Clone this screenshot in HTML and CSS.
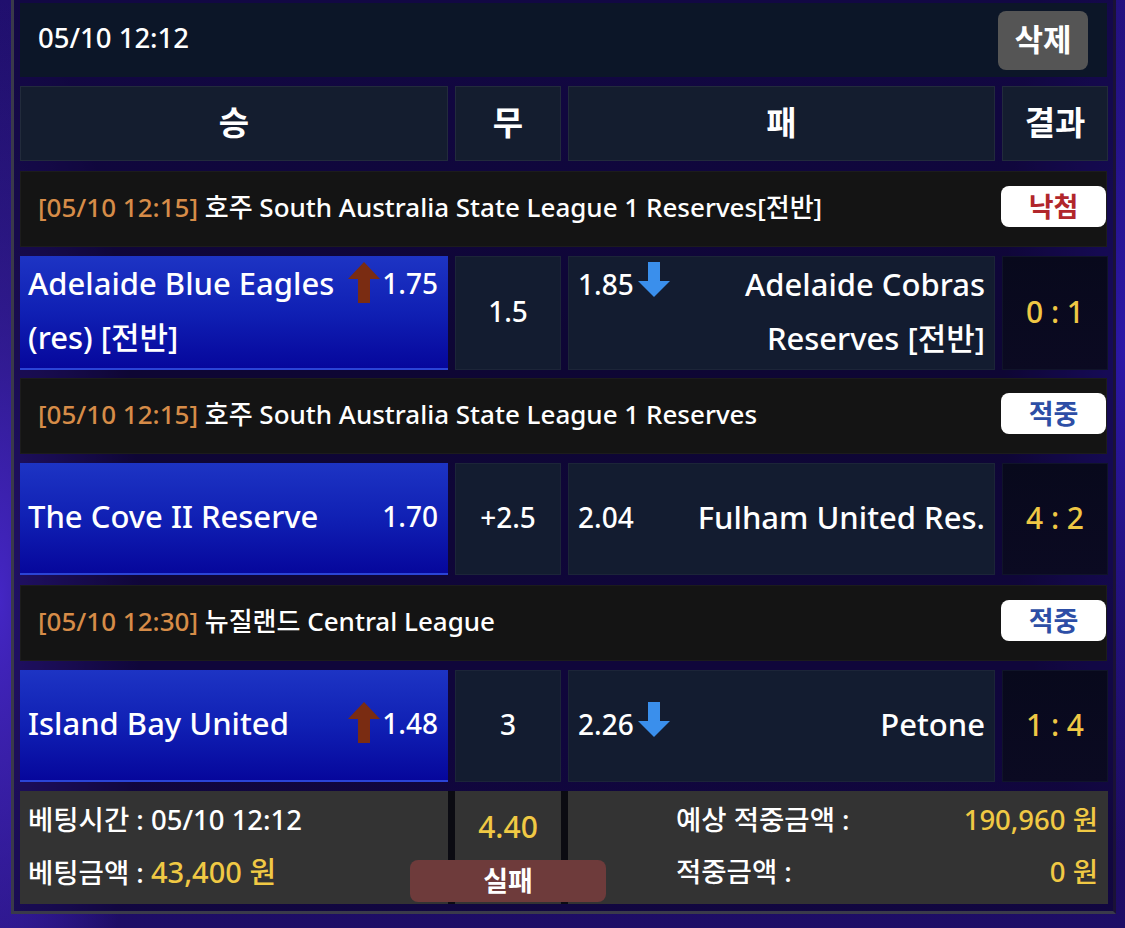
FILE: index.html
```html
<!DOCTYPE html>
<html lang="ko">
<head>
<meta charset="utf-8">
<link rel="stylesheet" href="styles.css">
</head>
<body>
<div class="frame">
  <div class="topbar">
    <span class="topbar-time">05/10 12:12</span>
    <button class="btn-del">삭제</button>
  </div>

  <div class="grid heads">
    <div class="head-cell">승</div>
    <div class="head-cell">무</div>
    <div class="head-cell">패</div>
    <div class="head-cell">결과</div>
  </div>

  <div class="league">
    <div class="league-text"><span class="league-date">[05/10 12:15]</span> 호주 South Australia State League 1 Reserves[전반]</div>
    <span class="badge badge-lose">낙첨</span>
  </div>
  <div class="grid match">
    <div class="home"><div class="team-wrap"><span class="odds odds-right"><svg class="arr-up" viewBox="0 0 32 41"><polygon points="16,0 32,17 22,17 22,41 10,41 10,17 0,17"/></svg>1.75</span>Adelaide Blue Eagles (res) [전반]</div></div>
    <div class="draw">1.5</div>
    <div class="away"><div class="team-wrap"><span class="odds odds-left">1.85<svg class="arr-down" viewBox="0 0 32 35"><polygon points="10,0 22,0 22,19 32,19 16,35 0,19 10,19"/></svg></span>Adelaide Cobras Reserves [전반]</div></div>
    <div class="result">0 : 1</div>
  </div>

  <div class="league">
    <div class="league-text"><span class="league-date">[05/10 12:15]</span> 호주 South Australia State League 1 Reserves</div>
    <span class="badge badge-win">적중</span>
  </div>
  <div class="grid match">
    <div class="home"><div class="team-wrap"><span class="odds odds-right">1.70</span>The Cove II Reserve</div></div>
    <div class="draw">+2.5</div>
    <div class="away"><div class="team-wrap"><span class="odds odds-left">2.04</span>Fulham United Res.</div></div>
    <div class="result">4 : 2</div>
  </div>

  <div class="league">
    <div class="league-text"><span class="league-date">[05/10 12:30]</span> 뉴질랜드 Central League</div>
    <span class="badge badge-win">적중</span>
  </div>
  <div class="grid match">
    <div class="home"><div class="team-wrap"><span class="odds odds-right"><svg class="arr-up" viewBox="0 0 32 41"><polygon points="16,0 32,17 22,17 22,41 10,41 10,17 0,17"/></svg>1.48</span>Island Bay United</div></div>
    <div class="draw">3</div>
    <div class="away"><div class="team-wrap"><span class="odds odds-left">2.26<svg class="arr-down" viewBox="0 0 32 35"><polygon points="10,0 22,0 22,19 32,19 16,35 0,19 10,19"/></svg></span>Petone</div></div>
    <div class="result">1 : 4</div>
  </div>

  <div class="footer">
    <div class="foot-left">
      <div>베팅시간 : 05/10 12:12</div>
      <div>베팅금액 : <span class="gold">43,400 원</span></div>
    </div>
    <div class="foot-mid">
      <div class="gold total-odds">4.40</div>
      <span class="status-fail">실패</span>
    </div>
    <div class="foot-right">
      <span>예상 적중금액 :</span><span class="gold val">190,960 원</span>
      <span>적중금액 :</span><span class="gold val">0 원</span>
    </div>
  </div>
</div>
</body>
</html>
```

FILE: styles.css
```css
* { box-sizing: border-box; }

html, body {
  margin: 0;
  padding: 0;
  height: 100%;
}

body {
  width: 1125px;
  height: 928px;
  overflow: hidden;
  font-family: "Noto Sans", "Noto Sans CJK KR", sans-serif;
  color: #ffffff;
  background:
    radial-gradient(ellipse 140px 600px at 0px 600px, #4426c4 0%, rgba(68,38,196,0) 100%),
    radial-gradient(ellipse 120px 500px at 1125px 350px, #2c18a8 0%, rgba(44,24,168,0) 100%),
    linear-gradient(180deg, #200f6e 0%, #150a48 40%, #1e0d66 100%);
}

.frame {
  margin-left: 11px;
  width: 1105px;
  padding: 3px 6px 7px 6px;
  border-left: 3px solid #3a3a4a;
  border-right: 3px solid #1a1236;
  border-bottom: 3px solid #3a3a4a;
  background: rgba(10, 4, 40, 0.6);
  display: flex;
  flex-direction: column;
  gap: 9px;
}

.topbar {
  height: 74px;
  background: #0c1628;
  display: flex;
  align-items: center;
  justify-content: space-between;
  padding: 0 19px 0 18px;
}

.topbar-time {
  font-size: 27.5px;
  font-weight: 500;
  margin-top: -6px;
}

.btn-del {
  width: 90px;
  height: 59px;
  border: none;
  border-radius: 8px;
  background: #555555;
  color: #ffffff;
  font-family: "Noto Sans CJK KR", sans-serif;
  font-size: 31px;
  font-weight: 700;
  padding: 0 0 6px 0;
  margin-top: 1px;
}

.grid {
  display: grid;
  grid-template-columns: 428px 106px 427px 106px;
  column-gap: 7px;
}

.heads { height: 75px; }

.head-cell {
  background: #141d2f;
  border: 1px solid #222b3c;
  display: flex;
  align-items: center;
  justify-content: center;
  font-family: "Noto Sans CJK KR", sans-serif;
  font-size: 33px;
  font-weight: 700;
  padding-bottom: 5px;
}

.league {
  height: 76px;
  background: #141414;
  border: 1px solid #1c1c1c;
  display: flex;
  align-items: center;
  justify-content: space-between;
  padding-left: 17px;
  margin-top: 1px;
}

.league-text {
  font-size: 26px;
  font-weight: 500;
  margin-top: -7px;
}

.league-date { color: #d68c48; }

.badge {
  width: 105px;
  height: 41px;
  background: #ffffff;
  border-radius: 8px;
  display: flex;
  align-items: center;
  justify-content: center;
  font-family: "Noto Sans CJK KR", sans-serif;
  font-size: 27px;
  font-weight: 700;
  margin-top: -5px;
  padding-bottom: 3px;
}

.badge-lose { color: #b1262b; }
.badge-win { color: #2d4ea6; }

.match { height: 112px; }

.home, .away {
  display: flex;
  align-items: center;
  font-size: 31px;
  font-weight: 500;
  line-height: 54px;
}

.home {
  background: linear-gradient(180deg, #1d34c4 0%, #1020b4 50%, #06079c 100%);
  border-bottom: 2px solid #2b44d6;
  padding: 0 10px 4px 8px;
}

.away {
  background: #131c30;
  border: 1px solid #1c2538;
  padding: 0 9px 4px 9px;
  text-align: right;
}

.team-wrap { width: 100%; }

.odds {
  white-space: nowrap;
  font-size: 28px;
}
.odds-right { float: right; }
.odds-left { float: left; }

.arr-up {
  width: 32px;
  height: 41px;
  fill: #7a2c12;
  vertical-align: middle;
  margin-top: -8px;
  margin-right: 2px;
}

.arr-down {
  width: 32px;
  height: 35px;
  fill: #3a8fec;
  vertical-align: middle;
  margin-top: -16px;
  margin-left: 4px;
}

.draw {
  background: #131c30;
  border: 1px solid #1c2538;
  display: flex;
  align-items: center;
  justify-content: center;
  font-size: 28px;
  font-weight: 500;
  padding-bottom: 4px;
}

.result {
  background: linear-gradient(180deg, #08091c 0%, #0b0a22 100%);
  border: 1px solid #10142a;
  display: flex;
  align-items: center;
  justify-content: center;
  font-size: 30px;
  font-weight: 500;
  color: #efc744;
  padding-bottom: 4px;
}

.footer {
  height: 113px;
  display: grid;
  grid-template-columns: 428px 106px 540px;
  column-gap: 7px;
  background: #0b0b12;
  font-size: 27.5px;
  font-weight: 500;
  line-height: 52px;
}

.gold { color: #f0c944; }

.foot-left {
  background: #333333;
  padding: 3px 8px 0 8px;
}

.foot-left .gold { font-size: 29px; }

.foot-mid {
  background: #333333;
  position: relative;
  text-align: center;
  padding-top: 10px;
  font-size: 30px;
}

.status-fail {
  position: absolute;
  left: 50%;
  bottom: 2px;
  transform: translateX(-50%);
  width: 196px;
  height: 42px;
  line-height: 40px;
  background: #6e3b3b;
  border-radius: 8px;
  color: #ffffff;
  font-family: "Noto Sans CJK KR", sans-serif;
  font-size: 27px;
  font-weight: 700;
}

.foot-right {
  background: #333333;
  display: grid;
  grid-template-columns: auto 1fr;
  align-content: start;
  padding: 3px 10px 0 108px;
}

.foot-right .val { text-align: right; }
```
